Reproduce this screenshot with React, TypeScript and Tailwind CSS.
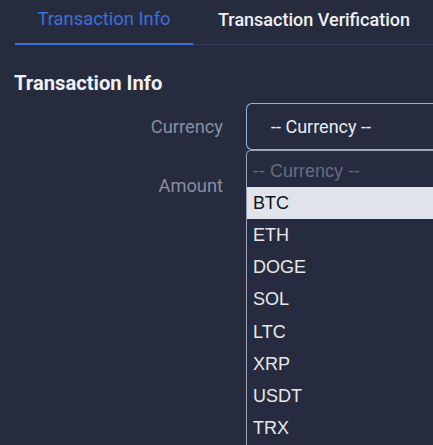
import React from "react";

const options = ["BTC", "ETH", "DOGE", "SOL", "LTC", "XRP", "USDT", "TRX"];

export default function App() {
  return (
    <div
      className="w-[433px] h-[445px] overflow-hidden bg-[#272b3e] relative"
      style={{ fontFamily: "Roboto, 'Noto Sans', sans-serif" }}
    >
      <div className="flex border-b border-[#323b5c] ml-[15px] h-[45px]">
        <div className="w-[178px] flex items-center justify-center text-[18.4px] text-[#3d6fdc] border-b-2 border-[#3d6fdc] -mb-px pb-[6px]">
          Transaction Info
        </div>
        <div className="pl-[25px] flex items-center text-[18px] font-medium text-[#eef0f5] whitespace-nowrap pb-[6px]">
          Transaction Verification
        </div>
      </div>

      <div className="pl-[14px] pt-[25px] text-[20.2px] font-bold text-[#eef0f5] leading-[27px]">
        Transaction Info
      </div>

      <div className="relative mt-[6px]">
        <div className="flex items-center">
          <div className="w-[223px] text-right text-[18.3px] text-[#878fa5]">Currency</div>
          <div className="ml-[23px] flex-1 h-[47px] border border-[#8fb0ec] rounded-l-[6px] border-r-0 flex items-center pl-[24px] text-[18px] text-[#e8eaf0]">
            -- Currency --
          </div>
        </div>
        <div className="flex items-center mt-[22px]">
          <div className="w-[223px] text-right text-[18.3px] text-[#878fa5]">Amount</div>
        </div>

        <div
          className="absolute left-[246px] top-[47px] right-0 h-[300px] bg-[#272b3f] border-l border-t border-[#9aa3b8] rounded-tl-[5px]"
          style={{ fontFamily: "'Liberation Sans', Arial, sans-serif" }}
        >
          <div className="h-[36px] pt-[4px] flex items-center pl-[6px] text-[18px] text-[#666d82]">
            -- Currency --
          </div>
          {options.map((o, i) => (
            <div
              key={o}
              className={
                i === 0
                  ? "h-[32px] flex items-center pl-[6px] text-[18px] bg-[#e1e3ea] text-[#111318]"
                  : "h-[32.3px] flex items-center pl-[6px] text-[18px] text-[#e6e8ee]"
              }
            >
              {o}
            </div>
          ))}
        </div>
      </div>
    </div>
  );
}
